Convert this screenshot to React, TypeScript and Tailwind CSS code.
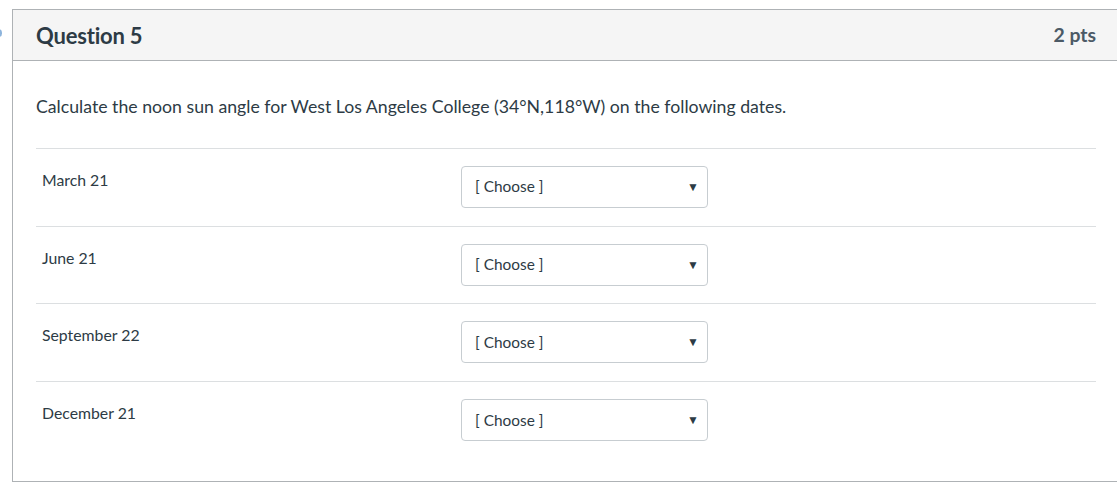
import { useState } from "react";

const dates = ["March 21", "June 21", "September 22", "December 21"];

function ChooseSelect() {
  const [value, setValue] = useState("");

  return (
    <div className="relative h-[42px] w-[247px]">
      <select
        value={value}
        onChange={(event) => setValue(event.target.value)}
        className="h-full w-full appearance-none rounded-[4px] border border-[#c7cdd1] bg-white pl-[13px] pr-8 text-[15.4px] text-[#2d3b45] outline-none"
      >
        <option value="">[ Choose ]</option>
      </select>
      <span className="pointer-events-none absolute right-[9px] top-1/2 -translate-y-1/2 text-[12px] leading-none text-[#2d3b45]">
        ▼
      </span>
    </div>
  );
}

export default function App() {
  return (
    <div className="relative h-[492px] w-[1117px] overflow-hidden bg-white font-['Lato','Liberation_Sans',sans-serif] text-[#2d3b45]">
      <span className="absolute -left-[5px] top-[29px] h-[8px] w-[7px] rounded-full bg-[#8db4dc]" />
      <div className="ml-[12px] mt-[9px] w-[1120px] border border-[#aeb2b5]">
        <div className="flex h-[51px] items-center justify-between border-b border-[#aeb2b5] bg-[#f5f5f5] pl-[23px] pr-[35px]">
          <h2 className="text-[22px] font-bold tracking-[-0.2px]">Question 5</h2>
          <span className="text-[19.4px] font-bold text-[#4c5a66]">2 pts</span>
        </div>
        <div className="pb-[22px] pl-[23px] pr-[35px] pt-[34px]">
          <p className="text-[17.7px] leading-[24px]">
            Calculate the noon sun angle for West Los Angeles College (34°N,118°W) on the following dates.
          </p>
          <div className="mt-[29px]">
            {dates.map((date) => (
              <div
                key={date}
                className="flex h-[77.7px] border-t border-[#dcdfe1] pt-[17px]"
              >
                <div className="w-[425px] pl-[6px] pt-[4px] text-[15.8px] leading-[20px]">{date}</div>
                <ChooseSelect />
              </div>
            ))}
          </div>
        </div>
      </div>
    </div>
  );
}
